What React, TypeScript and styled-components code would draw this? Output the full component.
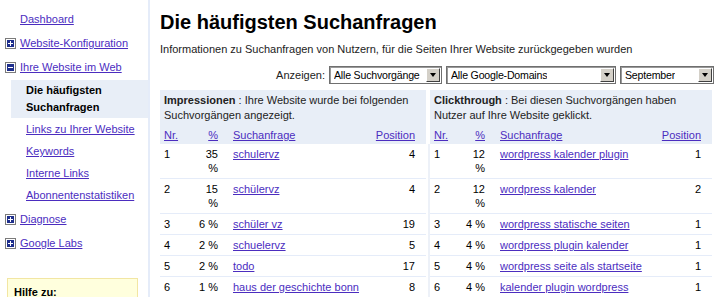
import styled, { createGlobalStyle } from "styled-components";

const GlobalStyle = createGlobalStyle`
  html, body {
    margin: 0;
    padding: 0;
    height: 297px;
    overflow: hidden;
    background: #fff;
  }
  body {
    font-family: "Liberation Sans", Arial, sans-serif;
    font-size: 11px;
    color: #000;
  }
`;

const LINK = "#4b2dbf";

const Page = styled.div`
  display: flex;
  height: 297px;
`;

const Sidebar = styled.nav`
  width: 150px;
  flex-shrink: 0;
  border-right: 2px solid #e5ecf9;
  padding-top: 8px;
  box-sizing: border-box;
`;

const NavItem = styled.div<{ $indent: number; $sub?: boolean }>`
  display: flex;
  align-items: center;
  gap: 4px;
  line-height: 15px;
  padding: ${(p) => (p.$sub ? "4px 0 3px" : "4px 0 5px")};
  padding-left: ${(p) => p.$indent}px;
`;

const NavLink = styled.a`
  color: ${LINK};
  text-decoration: underline;
  cursor: pointer;
`;

const CurrentItem = styled.div`
  margin-left: 11px;
  padding: 2px 4px 2px 15px;
  background: #e8eef7;
  font-weight: bold;
  line-height: 17px;
`;

const SubList = styled.div`
  margin-bottom: 2px;
`;

const HelpBox = styled.div`
  margin: 22px 10px 0 7px;
  padding: 6px 6px;
  background: #ffffdd;
  border: 1px solid #f2e6a3;
  font-weight: bold;
  line-height: 15px;
`;

const Main = styled.main`
  flex: 1;
  min-width: 0;
  padding: 10px 7px 0 10px;
`;

const Title = styled.h1`
  margin: 0;
  font-size: 20px;
  line-height: 24px;
  font-weight: bold;
`;

const Description = styled.p`
  margin: 8px 0 0;
  line-height: 15px;
  color: #222;
`;

const FilterRow = styled.div`
  display: flex;
  justify-content: flex-end;
  align-items: center;
  gap: 4px;
  margin-top: 9px;
  height: 18px;
`;

const FilterLabel = styled.span`
  color: #222;
`;

const Select = styled.div<{ $width: number }>`
  width: ${(p) => p.$width}px;
  height: 18px;
  box-sizing: border-box;
  display: flex;
  align-items: center;
  justify-content: space-between;
  gap: 2px;
  border: 1px solid #6f6f6f;
  box-shadow: inset 1px 1px 0 #9a9a9a;
  padding: 0 1px 0 4px;
  background: #fff;
`;

const SelectText = styled.span`
  font-size: 10.6px;
  letter-spacing: -0.2px;
  white-space: nowrap;
  overflow: hidden;
`;

const ArrowButton = styled.span`
  width: 14px;
  height: 14px;
  box-sizing: border-box;
  flex-shrink: 0;
  display: flex;
  align-items: center;
  justify-content: center;
  background: #d4d0c8;
  border: 1px solid;
  border-color: #fff #404040 #404040 #fff;
  &::after {
    content: "";
    border-left: 3.5px solid transparent;
    border-right: 3.5px solid transparent;
    border-top: 4px solid #000;
  }
`;

const Panels = styled.div`
  display: grid;
  grid-template-columns: 266px 282px;
  column-gap: 4px;
  margin-top: 6px;
`;

const Panel = styled.section``;

const PanelHead = styled.div`
  background: #e8eef7;
  padding: 3px 0 1px;
`;

const IntroLine = styled.div`
  padding: 0 4px;
  line-height: 15px;
  color: #222;
  white-space: nowrap;
`;

const Body = styled.div<{ $divider?: boolean }>`
  box-shadow: ${(p) => (p.$divider ? "-2px 0 0 #edf1f8" : "none")};
`;

const Row = styled.div<{ $cols: string; $head?: boolean }>`
  display: grid;
  grid-template-columns: ${(p) => p.$cols};
  padding: ${(p) => (p.$head ? "0 11px 0 4px" : "3px 11px 3px 4px")};
  margin-top: ${(p) => (p.$head ? "5px" : "0")};
  line-height: ${(p) => (p.$head ? "15px" : "14px")};
  border-bottom: ${(p) => (p.$head ? "none" : "1px solid #e5ecf9")};
`;

const Cell = styled.div<{ $align?: "left" | "right"; $pad?: number }>`
  text-align: ${(p) => p.$align || "left"};
  padding-left: ${(p) => p.$pad || 0}px;
`;

const Link = styled.a`
  color: ${LINK};
  text-decoration: underline;
  cursor: pointer;
`;

function ToggleIcon({ open }: { open?: boolean }) {
  return (
    <svg width="11" height="11" viewBox="0 0 11 11">
      <rect x="0.5" y="0.5" width="10" height="10" fill="#fff" stroke="#7b7b7b" />
      <rect x="2" y="2" width="7" height="7" fill="#1f2f8c" />
      <rect x="3" y="5" width="5" height="1" fill="#fff" />
      {!open && <rect x="5" y="3" width="1" height="5" fill="#fff" />}
    </svg>
  );
}

type Query = { nr: number; pct: string; query: string; pos: number };

const impressions: Query[] = [
  { nr: 1, pct: "35 %", query: "schulervz", pos: 4 },
  { nr: 2, pct: "15 %", query: "schülervz", pos: 4 },
  { nr: 3, pct: "6 %", query: "schüler vz", pos: 19 },
  { nr: 4, pct: "2 %", query: "schuelervz", pos: 5 },
  { nr: 5, pct: "2 %", query: "todo", pos: 17 },
  { nr: 6, pct: "1 %", query: "haus der geschichte bonn", pos: 8 },
];

const clicks: Query[] = [
  { nr: 1, pct: "12 %", query: "wordpress kalender plugin", pos: 1 },
  { nr: 2, pct: "12 %", query: "wordpress kalender", pos: 2 },
  { nr: 3, pct: "4 %", query: "wordpress statische seiten", pos: 1 },
  { nr: 4, pct: "4 %", query: "wordpress plugin kalender", pos: 1 },
  { nr: 5, pct: "4 %", query: "wordpress seite als startseite", pos: 1 },
  { nr: 6, pct: "4 %", query: "kalender plugin wordpress", pos: 1 },
];

function QueryPanel({
  title,
  lines,
  rows,
  cols,
  divider,
}: {
  title: string;
  lines: [string, string];
  rows: Query[];
  cols: string;
  divider?: boolean;
}) {
  return (
    <Panel>
      <PanelHead>
        <IntroLine>
          <b>{title}</b> : {lines[0]}
        </IntroLine>
        <IntroLine>{lines[1]}</IntroLine>
        <Row $cols={cols} $head>
          <Cell>
            <Link>Nr.</Link>
          </Cell>
          <Cell $align="right">
            <Link>%</Link>
          </Cell>
          <Cell $pad={15}>
            <Link>Suchanfrage</Link>
          </Cell>
          <Cell $align="right">
            <Link>Position</Link>
          </Cell>
        </Row>
      </PanelHead>
      <Body $divider={divider}>
        {rows.map((r) => (
          <Row $cols={cols} key={r.nr}>
            <Cell>{r.nr}</Cell>
            <Cell $align="right">{r.pct}</Cell>
            <Cell $pad={15}>
              <Link>{r.query}</Link>
            </Cell>
            <Cell $align="right">{r.pos}</Cell>
          </Row>
        ))}
      </Body>
    </Panel>
  );
}

export default function App() {
  return (
    <>
      <GlobalStyle />
      <Page>
        <Sidebar>
          <NavItem $indent={20}>
            <NavLink>Dashboard</NavLink>
          </NavItem>
          <NavItem $indent={5}>
            <ToggleIcon />
            <NavLink>Website-Konfiguration</NavLink>
          </NavItem>
          <NavItem $indent={5}>
            <ToggleIcon open />
            <NavLink>Ihre Website im Web</NavLink>
          </NavItem>
          <CurrentItem>
            Die häufigsten
            <br />
            Suchanfragen
          </CurrentItem>
          <SubList>
            <NavItem $indent={26} $sub>
              <NavLink>Links zu Ihrer Website</NavLink>
            </NavItem>
            <NavItem $indent={26} $sub>
              <NavLink>Keywords</NavLink>
            </NavItem>
            <NavItem $indent={26} $sub>
              <NavLink>Interne Links</NavLink>
            </NavItem>
            <NavItem $indent={26} $sub>
              <NavLink>Abonnentenstatistiken</NavLink>
            </NavItem>
          </SubList>
          <NavItem $indent={5}>
            <ToggleIcon />
            <NavLink>Diagnose</NavLink>
          </NavItem>
          <NavItem $indent={5}>
            <ToggleIcon />
            <NavLink>Google Labs</NavLink>
          </NavItem>
          <HelpBox>Hilfe zu:</HelpBox>
        </Sidebar>
        <Main>
          <Title>Die häufigsten Suchanfragen</Title>
          <Description>
            Informationen zu Suchanfragen von Nutzern, für die Seiten Ihrer
            Website zurückgegeben wurden
          </Description>
          <FilterRow>
            <FilterLabel>Anzeigen:</FilterLabel>
            <Select $width={113}>
              <SelectText>Alle Suchvorgänge</SelectText>
              <ArrowButton />
            </Select>
            <Select $width={170}>
              <SelectText>Alle Google-Domains</SelectText>
              <ArrowButton />
            </Select>
            <Select $width={94}>
              <SelectText>September</SelectText>
              <ArrowButton />
            </Select>
          </FilterRow>
          <Panels>
            <QueryPanel
              title="Impressionen"
              lines={[
                "Ihre Website wurde bei folgenden",
                "Suchvorgängen angezeigt.",
              ]}
              rows={impressions}
              cols="32px 22px 1fr auto"
            />
            <QueryPanel
              title="Clickthrough"
              lines={[
                "Bei diesen Suchvorgängen haben",
                "Nutzer auf Ihre Website geklickt.",
              ]}
              rows={clicks}
              cols="29px 22px 1fr auto"
              divider
            />
          </Panels>
        </Main>
      </Page>
    </>
  );
}
